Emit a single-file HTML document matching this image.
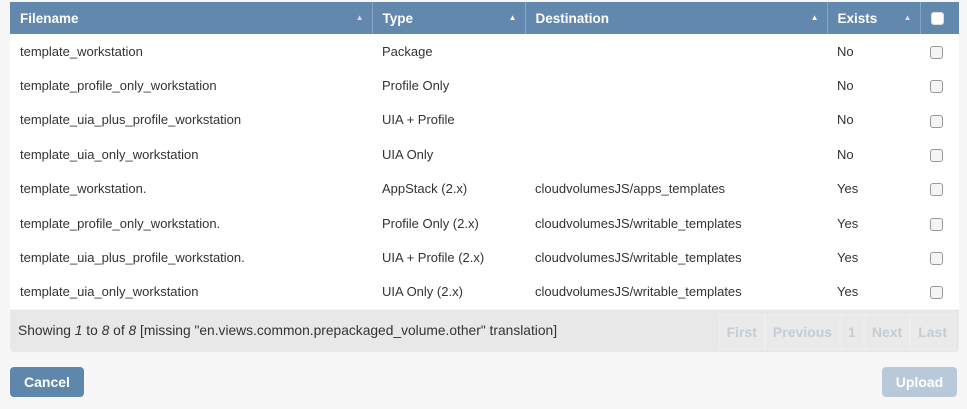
<!DOCTYPE html>
<html><head><style>
body{margin:0;width:967px;height:409px;background:#f7f7f7;font-family:"Liberation Sans",sans-serif;font-size:13px;color:#333;position:relative;overflow:hidden}
.tbl{position:absolute;left:10px;top:2px;width:949px;background:#fff}
table{border-collapse:collapse;width:949px;table-layout:fixed}
th{background:#6388ad;color:#fff;text-align:left;font-weight:bold;font-size:13.5px;height:32px;padding:0 0 0 10px;border-right:1px solid #8aa6c2;position:relative}
th:last-child{border-right:none}
th .s{position:absolute;right:8px;top:11px;font-size:8px;color:#dde}
td{height:34.4px;padding:0 0 0 10px;white-space:nowrap}
.cb{display:inline-block;width:11px;height:11px;border:1px solid #999;border-radius:3px;background:#f4f4f4;vertical-align:middle}
.foot{position:absolute;left:10px;top:310px;width:949px;height:42px;background:#e8e8e8;border-radius:0 0 4px 4px}
.foot .t{position:absolute;left:8px;top:13px;font-size:13.8px}
.pg{position:absolute;right:4px;top:4px;display:flex;color:#c5ccd6;font-size:14px}
.pg span{padding:9px 7px;border:1px solid #eee;background:#eaeaea;font-weight:bold}
.btn{position:absolute;top:367px;height:30px;border-radius:4px;color:#fff;font-weight:bold;font-size:14px;line-height:30px;text-align:center}
</style></head><body>
<div class="tbl"><table>
<colgroup><col style="width:362px"><col style="width:153px"><col style="width:302px"><col style="width:93px"><col style="width:39px"></colgroup>
<tr><th>Filename<span class="s">▲</span></th><th>Type<span class="s" style="color:#fff">▲</span></th><th>Destination<span class="s" style="color:#fff">▲</span></th><th>Exists<span class="s">▲</span></th><th><span class="cb" style="background:#fff;border-color:#ddd"></span></th></tr>
<tr><td>template_workstation</td><td>Package</td><td></td><td>No</td><td><span class="cb"></span></td></tr>
<tr><td>template_profile_only_workstation</td><td>Profile Only</td><td></td><td>No</td><td><span class="cb"></span></td></tr>
<tr><td>template_uia_plus_profile_workstation</td><td>UIA + Profile</td><td></td><td>No</td><td><span class="cb"></span></td></tr>
<tr><td>template_uia_only_workstation</td><td>UIA Only</td><td></td><td>No</td><td><span class="cb"></span></td></tr>
<tr><td>template_workstation.</td><td>AppStack (2.x)</td><td>cloudvolumesJS/apps_templates</td><td>Yes</td><td><span class="cb"></span></td></tr>
<tr><td>template_profile_only_workstation.</td><td>Profile Only (2.x)</td><td>cloudvolumesJS/writable_templates</td><td>Yes</td><td><span class="cb"></span></td></tr>
<tr><td>template_uia_plus_profile_workstation.</td><td>UIA + Profile (2.x)</td><td>cloudvolumesJS/writable_templates</td><td>Yes</td><td><span class="cb"></span></td></tr>
<tr><td>template_uia_only_workstation</td><td>UIA Only (2.x)</td><td>cloudvolumesJS/writable_templates</td><td>Yes</td><td><span class="cb"></span></td></tr>
</table></div>
<div class="foot"><div class="t">Showing <i>1</i> to <i>8</i> of <i>8</i> [missing "en.views.common.prepackaged_volume.other" translation]</div>
<div class="pg"><span>First</span><span>Previous</span><span>1</span><span>Next</span><span>Last</span></div></div>
<div class="btn" style="left:10px;width:74px;background:#5f86ab">Cancel</div>
<div class="btn" style="left:882px;width:75px;background:#b8cad9">Upload</div>
</body></html>
